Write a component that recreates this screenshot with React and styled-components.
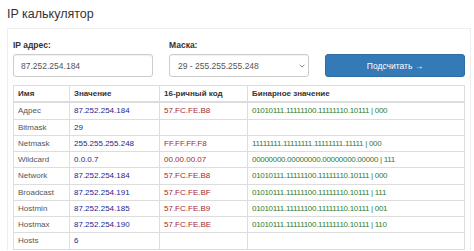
import React from 'react';
import styled, { createGlobalStyle } from 'styled-components';

const rows = [
  { name: 'Адрес', value: '87.252.254.184', hex: '57.FC.FE.B8', bin: '01010111.11111100.11111110.10111 | 000' },
  { name: 'Bitmask', value: '29', hex: '', bin: '' },
  { name: 'Netmask', value: '255.255.255.248', hex: 'FF.FF.FF.F8', bin: '11111111.11111111.11111111.11111 | 000' },
  { name: 'Wildcard', value: '0.0.0.7', hex: '00.00.00.07', bin: '00000000.00000000.00000000.00000 | 111' },
  { name: 'Network', value: '87.252.254.184', hex: '57.FC.FE.B8', bin: '01010111.11111100.11111110.10111 | 000' },
  { name: 'Broadcast', value: '87.252.254.191', hex: '57.FC.FE.BF', bin: '01010111.11111100.11111110.10111 | 111' },
  { name: 'Hostmin', value: '87.252.254.185', hex: '57.FC.FE.B9', bin: '01010111.11111100.11111110.10111 | 001' },
  { name: 'Hostmax', value: '87.252.254.190', hex: '57.FC.FE.BE', bin: '01010111.11111100.11111110.10111 | 110' },
  { name: 'Hosts', value: '6', hex: '', bin: '' },
];

const IpCalculator = () => {
  return (
    <>
      <GlobalStyle />
      <Page>
        <Title>IP калькулятор</Title>
        <Panel>
          <FormRow>
            <Field>
              <Label>IP адрес:</Label>
              <Input type='text' defaultValue='87.252.254.184' />
            </Field>
            <Field>
              <Label>Маска:</Label>
              <SelectBox>
                <span>29 - 255.255.255.248</span>
                <svg width='6' height='4' viewBox='0 0 6 4'>
                  <path d='M0.6 0.7 L3 3.1 L5.4 0.7' fill='none' stroke='#777' strokeWidth='0.9' />
                </svg>
              </SelectBox>
            </Field>
            <Field>
              <Button>Подсчитать →</Button>
            </Field>
          </FormRow>
          <Table>
            <colgroup>
              <col style={{ width: '56px' }} />
              <col style={{ width: '90px' }} />
              <col style={{ width: '88px' }} />
              <col />
            </colgroup>
            <thead>
              <tr>
                <th>Имя</th>
                <th>Значение</th>
                <th>16-ричный код</th>
                <th>Бинарное значение</th>
              </tr>
            </thead>
            <tbody>
              {rows.map((r) => (
                <tr key={r.name}>
                  <Cell kind='name'>{r.name}</Cell>
                  <Cell kind='value'>{r.value}</Cell>
                  <Cell kind='hex'>{r.hex}</Cell>
                  <Cell kind='bin'>{r.bin}</Cell>
                </tr>
              ))}
            </tbody>
          </Table>
        </Panel>
      </Page>
    </>
  );
};

const GlobalStyle = createGlobalStyle`
  body {
    margin: 0;
    background: #fff;
    font-family: 'Liberation Sans', Arial, sans-serif;
    color: #333;
  }
`;

const Page = styled.div`
  width: 474px;
  padding: 0 3px 0 7px;
  box-sizing: border-box;
`;

const Title = styled.div`
  padding-top: 7px;
  height: 21px;
  font-size: 12.5px;
  line-height: 14px;
  color: #333;
`;

const Panel = styled.div`
  border: 1px solid #eee;
  border-bottom: none;
  padding: 10px 5px 0 5px;
`;

const FormRow = styled.div`
  display: grid;
  grid-template-columns: 140px 140px 140px;
  column-gap: 16px;
  align-items: end;
`;

const Field = styled.div`
  display: flex;
  flex-direction: column;
`;

const Label = styled.label`
  font-size: 8.5px;
  font-weight: 700;
  line-height: 12px;
  margin-bottom: 3px;
  color: #333;
`;

const Input = styled.input`
  box-sizing: border-box;
  height: 23px;
  width: 100%;
  border: 1px solid #ccc;
  border-radius: 3px;
  padding: 0 7px;
  font-family: 'Liberation Sans', Arial, sans-serif;
  font-size: 8.5px;
  color: #555;
  box-shadow: inset 0 1px 1px rgba(0, 0, 0, 0.06);
  outline: none;
`;

const SelectBox = styled.div`
  box-sizing: border-box;
  height: 23px;
  display: flex;
  align-items: center;
  justify-content: space-between;
  border: 1px solid #ccc;
  border-radius: 3px;
  padding: 0 3px 0 8px;
  font-size: 8.5px;
  color: #555;
  box-shadow: inset 0 1px 1px rgba(0, 0, 0, 0.06);
`;

const Button = styled.button`
  box-sizing: border-box;
  height: 23px;
  width: 100%;
  background: #337ab7;
  border: 1px solid #2e6da4;
  border-radius: 3px;
  color: #fff;
  font-family: 'Liberation Sans', Arial, sans-serif;
  font-size: 8.5px;
`;

const Table = styled.table`
  width: 100%;
  margin-top: 8px;
  border-collapse: collapse;
  table-layout: fixed;
  font-size: 8px;
  th,
  td {
    border: 1px solid #ddd;
    padding: 2px 4px;
    line-height: 11.25px;
    text-align: left;
    white-space: nowrap;
    overflow: hidden;
  }
  th {
    font-weight: 700;
    color: #333;
    border-bottom-width: 2px;
  }
`;

const colors = {
  name: '#555',
  value: '#25258c',
  hex: '#a52a2a',
  bin: '#2e7d32',
};

const Cell = styled.td`
  color: ${(p) => colors[p.kind]};
  letter-spacing: ${(p) => (p.kind === 'bin' ? '-0.3px' : '0')};
`;

export default IpCalculator;
